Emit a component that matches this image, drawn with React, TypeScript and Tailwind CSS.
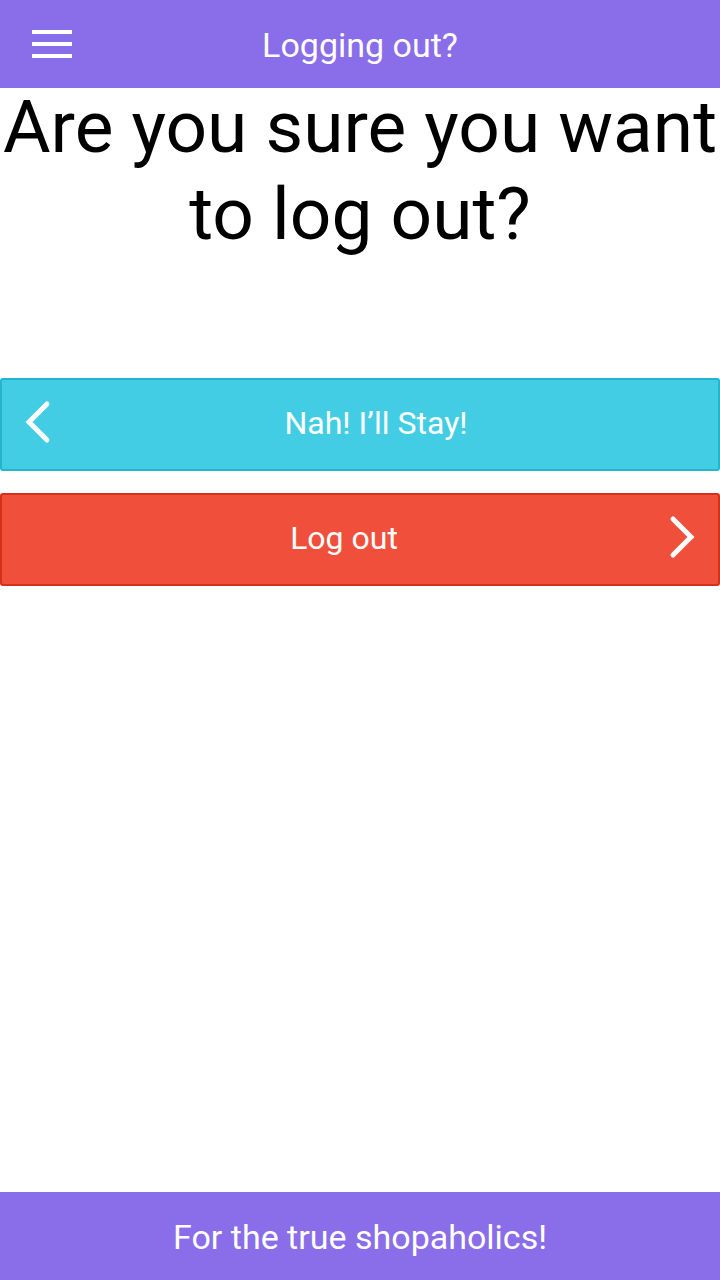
import React from "react";

const font = { fontFamily: "Roboto, 'Noto Sans', sans-serif" } as React.CSSProperties;

function ChevronLeft() {
  return (
    <svg width="28" height="46" viewBox="0 0 28 46" className="mb-[5px] block">
      <polyline points="23,5 5,23 23,41" fill="none" stroke="#ffffff" strokeWidth="5" strokeLinecap="round" strokeLinejoin="miter" />
    </svg>
  );
}

function ChevronRight() {
  return (
    <svg width="28" height="46" viewBox="0 0 28 46" className="mb-[5px] block">
      <polyline points="5,5 23,23 5,41" fill="none" stroke="#ffffff" strokeWidth="5" strokeLinecap="round" strokeLinejoin="miter" />
    </svg>
  );
}

export default function App() {
  return (
    <div className="flex h-[1280px] w-[720px] flex-col bg-white" style={font}>
      <header className="flex h-[88px] shrink-0 items-center bg-[#896de9] text-white">
        <div className="flex w-[180px] pl-[32px]">
          <div className="flex flex-col gap-[8px]">
            <span className="block h-[4px] w-[40px] bg-white" />
            <span className="block h-[4px] w-[40px] bg-white" />
            <span className="block h-[4px] w-[40px] bg-white" />
          </div>
        </div>
        <div className="flex-1 pt-[2px] text-center text-[34px] leading-[42px]">Logging out?</div>
        <div className="w-[180px]" />
      </header>

      <main className="flex flex-1 flex-col">
        <h1 className="mt-[-4px] text-center text-[73px] font-normal leading-[87px] text-black">
          Are you sure you want to log out?
        </h1>

        <div className="mt-[120px] flex flex-col gap-[22px]">
          <button className="flex h-[93px] w-full items-center rounded-[3px] border-2 border-[#22b5cc] bg-[#43cde5] text-white">
            <span className="flex w-[62px] items-center pl-[22px]">
              <ChevronLeft />
            </span>
            <span className="mb-[4px] flex-1 text-center text-[32px] leading-[38px]">Nah! I’ll Stay!</span>
            <span className="w-[30px]" />
          </button>
          <button className="flex h-[93px] w-full items-center rounded-[3px] border-2 border-[#d6301c] bg-[#f04f3c] text-white">
            <span className="w-[30px]" />
            <span className="mb-[4px] flex-1 text-center text-[32px] leading-[38px]">Log out</span>
            <span className="flex w-[62px] items-center pl-[12px]">
              <ChevronRight />
            </span>
          </button>
        </div>
      </main>

      <footer className="flex h-[88px] shrink-0 items-center justify-center bg-[#896de9] pt-[2px] text-[34px] leading-[42px] text-white">
        For the true shopaholics!
      </footer>
    </div>
  );
}
